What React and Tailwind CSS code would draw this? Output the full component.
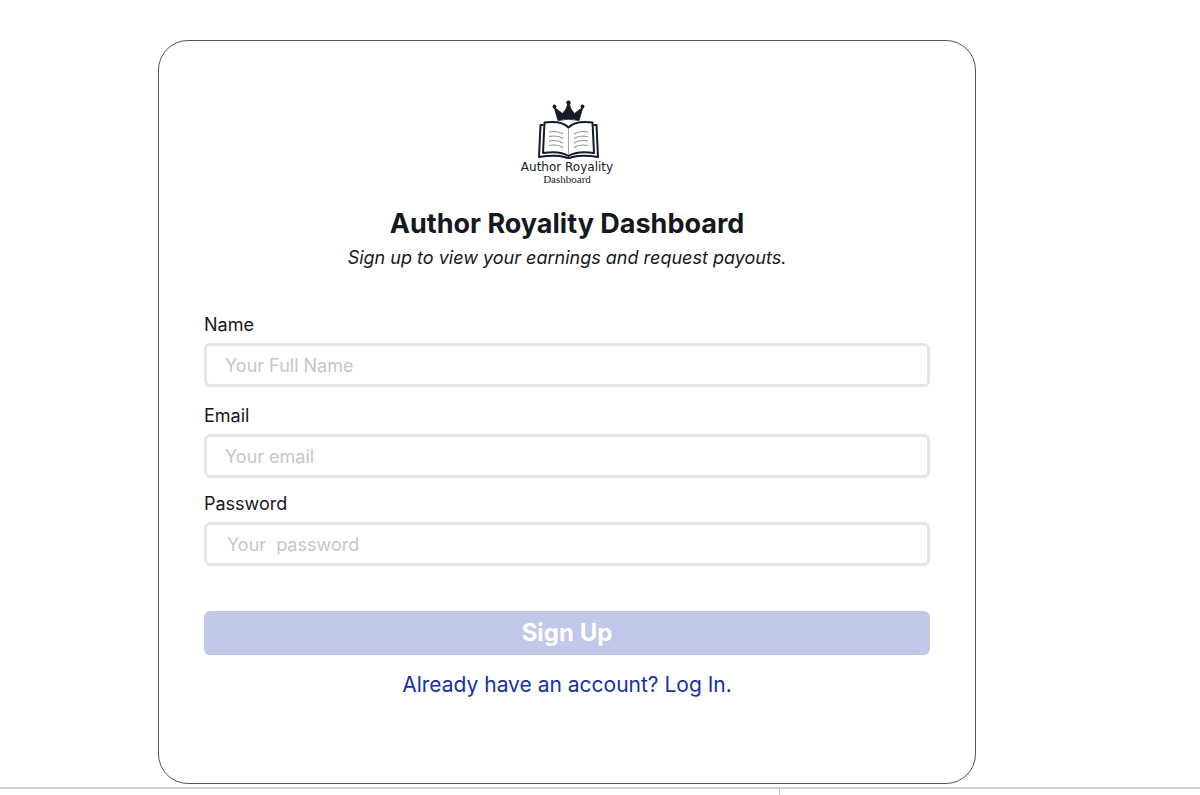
import { useState } from 'react';

const fields = [
    { id: 'name', label: 'Name', type: 'text', placeholder: 'Your Full Name', wrapper: '', input: 'px-[18px]' },
    { id: 'email', label: 'Email', type: 'email', placeholder: 'Your email', wrapper: 'mt-[15px]', input: 'px-[18px]' },
    { id: 'password', label: 'Password', type: 'password', placeholder: 'Your\u00a0 password', wrapper: 'mt-3', input: 'px-5' },
];

const Logo = () => (
    <div className="flex flex-col items-center text-[#141c28]">
        <svg viewBox="0 0 64 60" className="h-[60px] w-16" fill="none" aria-hidden="true">
            {/* Crown */}
            <path
                d="M23 20.5 L19 7 L23.5 10.5 L27.5 13.5 L31 9 L33.5 2 L36 9 L39.5 13.5 L43.5 10.5 L48 7 L44 20.5 Q33.5 18 23 20.5Z"
                fill="currentColor"
                stroke="currentColor"
                strokeWidth="0.8"
                strokeLinejoin="round"
            />
            <circle cx="19.5" cy="6.5" r="1.9" fill="currentColor" />
            <circle cx="33.5" cy="2.8" r="2.2" fill="currentColor" />
            <circle cx="47.5" cy="6.5" r="1.9" fill="currentColor" />
            {/* Cover */}
            <path
                d="M8.5 25 H5.5 L4 57 Q20 54.5 29.5 57 Q33.5 59 37.5 57 Q47 54.5 63 57 L61.5 25 H58.5"
                stroke="currentColor"
                strokeWidth="2"
                strokeLinejoin="round"
            />
            {/* Pages */}
            <path
                d="M33.5 27.5 Q27 20.5 9.5 22.5 L8 53 Q25 50.5 33.5 56 Q42 50.5 59 53 L57.5 22.5 Q40 20.5 33.5 27.5Z"
                stroke="currentColor"
                strokeWidth="2"
                strokeLinejoin="round"
            />
            <path d="M33.5 28 V55" stroke="#8b8f96" strokeWidth="0.8" />
            <path
                d="M14 32 Q23 30.5 28 34 M14 36.5 Q23 35 28 38.5 M14 41 Q23 39.5 28 43 M14 45.5 Q23 44 28 47.5 M39 34 Q44 30.5 53 32 M39 38.5 Q44 35 53 36.5 M39 43 Q44 39.5 53 41 M39 47.5 Q44 44 53 45.5"
                stroke="#8b8f96"
                strokeWidth="1.1"
            />
        </svg>
        <span className="font-['DejaVu_Sans',sans-serif] text-[12px] leading-[14px]">Author Royality</span>
        <span className="font-['Liberation_Serif',serif] text-[11px] leading-[10px]">Dashboard</span>
    </div>
);

const App = () => {
    const [values, setValues] = useState({ name: '', email: '', password: '' });

    const handleChange = (e) => {
        setValues({ ...values, [e.target.id]: e.target.value });
    };

    return (
        <div className="flex min-h-screen flex-col bg-white font-['Inter',sans-serif] text-[#14181f]">
            <main className="mt-10 mr-[224px] mb-[3px] ml-[158px] rounded-[30px] border border-[#555] px-[45px] pt-[59px] pb-[84px]">
                <Logo />

                <h1 className="mt-[22px] text-center text-[27px] leading-9 font-bold">Author Royality Dashboard</h1>
                <p className="mt-0.5 text-center text-lg leading-7 italic">
                    Sign up to view your earnings and request payouts.
                </p>

                <form className="mt-[39px]" onSubmit={(e) => e.preventDefault()}>
                    {fields.map((field) => (
                        <div key={field.id} className={field.wrapper}>
                            <label htmlFor={field.id} className="block text-lg leading-7">
                                {field.label}
                            </label>
                            <input
                                id={field.id}
                                type={field.type}
                                placeholder={field.placeholder}
                                value={values[field.id]}
                                onChange={handleChange}
                                className={`mt-1 block h-11 w-full rounded-md border-3 border-[#e5e5e5] text-lg placeholder:text-[#c6c6c6] ${field.input}`}
                            />
                        </div>
                    ))}

                    <button
                        type="submit"
                        className="mt-[45px] block h-11 w-full rounded-md bg-[#c2c8ea] text-2xl font-bold text-white"
                    >
                        Sign Up
                    </button>
                </form>

                <p className="mt-4 text-center text-[21px] leading-7">
                    <a href="#login" className="text-[#1630a5]">Already have an account? Log In.</a>
                </p>
            </main>

            <footer className="flex flex-1 border-t-2 border-[#cdcdcd]">
                <div className="w-[65%] border-r border-[#c4c4c4]"></div>
            </footer>
        </div>
    );
};

export default App;
